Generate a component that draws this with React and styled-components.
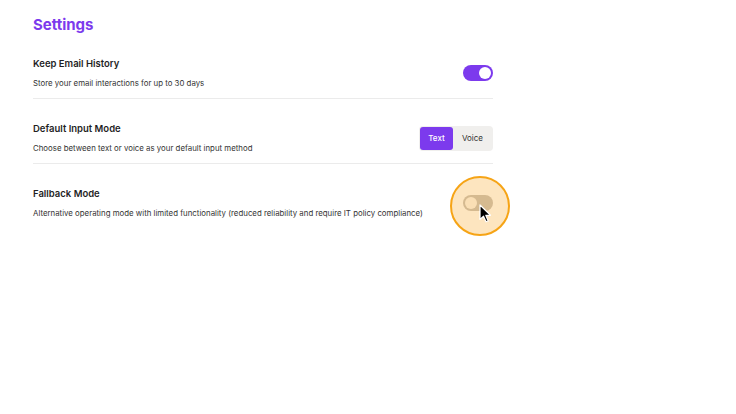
import React, { useState } from "react";
import styled, { createGlobalStyle } from "styled-components";

const Global = createGlobalStyle`
  html, body { margin: 0; padding: 0; background: #ffffff; }
  body { font-family: Inter, "Noto Sans", "Liberation Sans", sans-serif; -webkit-font-smoothing: antialiased; }
  * { box-sizing: border-box; }
`;

const Page = styled.div`
  width: 736px;
  min-height: 414px;
  padding: 16px 0 0 33px;
  background: #fff;
`;

const Panel = styled.div`
  width: 460px;
  display: flex;
  flex-direction: column;
`;

const Title = styled.h1`
  margin: 0;
  font-size: 15px;
  line-height: 18px;
  font-weight: 700;
  color: #7c3aed;
  letter-spacing: 0;
`;

const Row = styled.div`
  display: flex;
  align-items: center;
  justify-content: space-between;
  padding: 23px 0 9px;
  border-bottom: ${(p) => (p.$last ? "none" : "1px solid #ebebeb")};
`;

const Texts = styled.div`
  display: flex;
  flex-direction: column;
  gap: 6px;
`;

const Label = styled.div`
  font-size: 9.5px;
  line-height: 14px;
  font-weight: 600;
  color: #1f1f1f;
`;

const Desc = styled.div`
  font-size: 7.85px;
  line-height: 12px;
  color: #333333;
`;

const Track = styled.button`
  position: relative;
  display: block;
  width: 30px;
  height: 16px;
  border: none;
  padding: 0;
  border-radius: 8px;
  background: ${(p) => (p.$on ? "#7c3aed" : "#c9c4bf")};
  cursor: pointer;
  flex-shrink: 0;
`;

const Knob = styled.span`
  position: absolute;
  top: 2px;
  left: ${(p) => (p.$on ? "16px" : "2px")};
  width: 12px;
  height: 12px;
  border-radius: 50%;
  background: ${(p) => (p.$on ? "#ffffff" : "#fbf7f2")};
`;

const Segment = styled.div`
  display: flex;
  padding: 1px;
  background: #f0efed;
  border-radius: 4px;
  height: 25px;
`;

const SegButton = styled.button`
  border: none;
  border-radius: 3px;
  padding: 0;
  width: ${(p) => p.$w}px;
  height: 23px;
  font-family: inherit;
  font-size: 8px;
  font-weight: ${(p) => (p.$active ? 500 : 400)};
  background: ${(p) => (p.$active ? "#7c3aed" : "transparent")};
  color: ${(p) => (p.$active ? "#ffffff" : "#333333")};
  cursor: pointer;
`;

const Spot = styled.div`
  position: relative;
  display: flex;
  flex-shrink: 0;
`;

const Ring = styled.span`
  position: absolute;
  left: 17px;
  top: 11px;
  width: 60px;
  height: 60px;
  margin: -30px 0 0 -30px;
  border-radius: 50%;
  border: 2px solid #f6a416;
  background: rgba(248, 158, 20, 0.27);
  pointer-events: none;
`;

const Pointer = styled.svg`
  position: absolute;
  left: 16px;
  top: 9px;
  pointer-events: none;
`;

function Toggle({ on, onClick }) {
  return (
    <Track $on={on} onClick={onClick} aria-pressed={on}>
      <Knob $on={on} />
    </Track>
  );
}

export default function App() {
  const [history, setHistory] = useState(true);
  const [mode, setMode] = useState("text");
  const [fallback, setFallback] = useState(false);

  return (
    <>
      <Global />
      <Page>
        <Panel>
          <Title>Settings</Title>
          <Row>
            <Texts>
              <Label>Keep Email History</Label>
              <Desc>Store your email interactions for up to 30 days</Desc>
            </Texts>
            <Toggle on={history} onClick={() => setHistory(!history)} />
          </Row>
          <Row>
            <Texts>
              <Label>Default Input Mode</Label>
              <Desc>Choose between text or voice as your default input method</Desc>
            </Texts>
            <Segment>
              <SegButton $w={33} $active={mode === "text"} onClick={() => setMode("text")}>
                Text
              </SegButton>
              <SegButton $w={39} $active={mode === "voice"} onClick={() => setMode("voice")}>
                Voice
              </SegButton>
            </Segment>
          </Row>
          <Row $last>
            <Texts>
              <Label>Fallback Mode</Label>
              <Desc>
                Alternative operating mode with limited functionality (reduced reliability and require IT policy compliance)
              </Desc>
            </Texts>
            <Spot>
              <Toggle on={fallback} onClick={() => setFallback(!fallback)} />
              <Ring />
              <Pointer width="13" height="19" viewBox="0 0 13 19">
                <path
                  d="M1 1 L1 15.5 L4.5 12.2 L7 17.8 L9.2 16.9 L6.8 11.3 L11.5 11.3 Z"
                  fill="#000"
                  stroke="#fff"
                  strokeWidth="1.2"
                  strokeLinejoin="round"
                />
              </Pointer>
            </Spot>
          </Row>
        </Panel>
      </Page>
    </>
  );
}
